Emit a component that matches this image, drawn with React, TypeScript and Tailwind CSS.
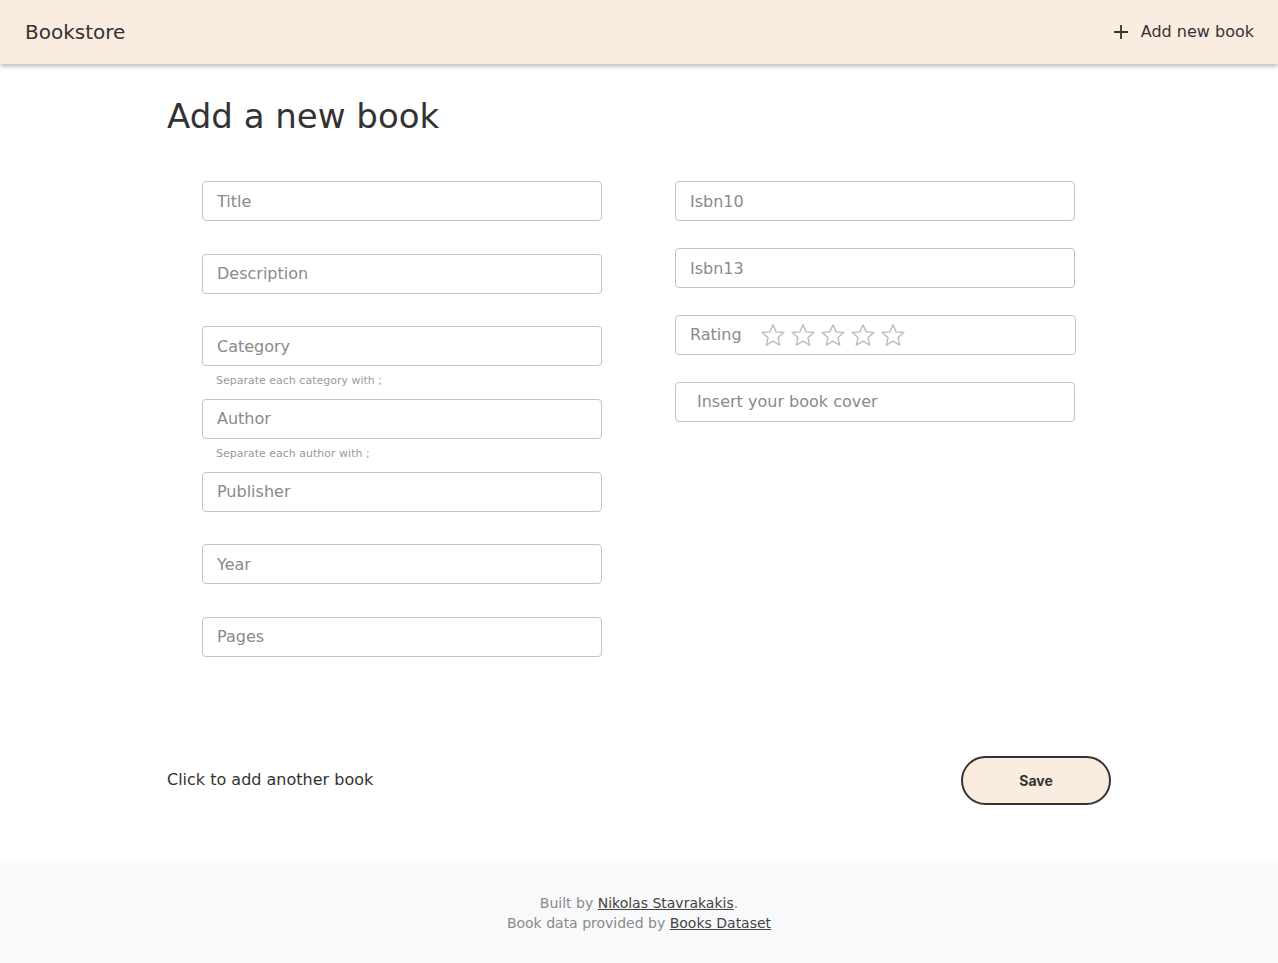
const font = "font-['DejaVu_Sans',sans-serif]"

function Star() {
  return (
    <svg width="26" height="26" viewBox="0 0 24 24" fill="none" stroke="#bdbdbd" strokeWidth="1.3" strokeLinejoin="round">
      <path d="M12 2.5l2.9 6.6 7.1.6-5.4 4.7 1.6 7-6.2-3.7-6.2 3.7 1.6-7L2 9.7l7.1-.6z" />
    </svg>
  )
}

function Field({ label, hint }: { label: string; hint?: string }) {
  return (
    <div className="flex flex-col h-[72.67px]">
      <input
        placeholder={label}
        className="h-10 w-full rounded border border-[#c4c4c4] px-[14px] text-[16px] text-[#333] placeholder-[#8a8a8a] outline-none"
      />
      {hint && <p className="pt-[9px] pl-[14px] text-[11px] leading-[12px] text-[#9a9a9a]">{hint}</p>}
    </div>
  )
}

export default function App() {
  const left = [
    { label: "Title" },
    { label: "Description" },
    { label: "Category", hint: "Separate each category with ;" },
    { label: "Author", hint: "Separate each author with ;" },
    { label: "Publisher" },
    { label: "Year" },
    { label: "Pages" },
  ]

  return (
    <div className={`${font} min-h-screen flex flex-col bg-white`}>
      <header className="h-16 bg-[#fbece0] shadow-[0_2px_5px_rgba(0,0,0,0.3)] flex items-center justify-between pl-[25px] pr-[24px] relative z-10">
        <span className="text-[20px] text-[#333]">Bookstore</span>
        <div className="flex items-center gap-[13px] text-[16px] text-[#333]">
          <svg width="14" height="14" viewBox="0 0 14 14" stroke="#333" strokeWidth="1.8">
            <path d="M7 0v14M0 7h14" />
          </svg>
          <span>Add new book</span>
        </div>
      </header>

      <main className="w-[944px] mx-auto">
        <h1 className="mt-[32px] text-[34px] leading-[41px] text-[#333]">Add a new book</h1>

        <div className="grid grid-cols-2 mt-[44px]">
          <div className="w-[400px] ml-[35px] flex flex-col">
            {left.map((f) => (
              <Field key={f.label} label={f.label} hint={f.hint} />
            ))}
          </div>

          <div className="w-[400px] mx-auto flex flex-col gap-[27px]">
            <input
              placeholder="Isbn10"
              className="h-10 w-full rounded border border-[#c4c4c4] px-[14px] text-[16px] placeholder-[#8a8a8a] outline-none"
            />
            <input
              placeholder="Isbn13"
              className="h-10 w-full rounded border border-[#c4c4c4] px-[14px] text-[16px] placeholder-[#8a8a8a] outline-none"
            />
            <div className="h-10 w-[401px] rounded border border-[#c4c4c4] flex items-center pl-[14px] gap-[18px]">
              <span className="text-[16px] text-[#8a8a8a]">Rating</span>
              <div className="flex gap-[4px]">
                {[0, 1, 2, 3, 4].map((i) => (
                  <Star key={i} />
                ))}
              </div>
            </div>
            <div className="h-10 rounded border border-[#c4c4c4] flex items-center pl-[21px]">
              <span className="text-[16px] text-[#8a8a8a]">Insert your book cover</span>
            </div>
          </div>
        </div>

        <div className="flex items-center justify-between mt-[66px] mb-[58px]">
          <span className="text-[16px] text-[#333]">Click to add another book</span>
          <button className="w-[150px] h-[49px] rounded-full border-2 border-[#333] bg-[#fbece0] font-['Inter',sans-serif] font-bold text-[14px] text-[#333]">
            Save
          </button>
        </div>
      </main>

      <footer className="bg-[#f8f9fa] py-[30px] text-center text-[14px] leading-[20px] text-[#8a8a8a]">
        <p>
          Built by <a className="underline text-[#444]">Nikolas Stavrakakis</a>.
        </p>
        <p>
          Book data provided by <a className="underline text-[#444]">Books Dataset</a>
        </p>
      </footer>
    </div>
  )
}
